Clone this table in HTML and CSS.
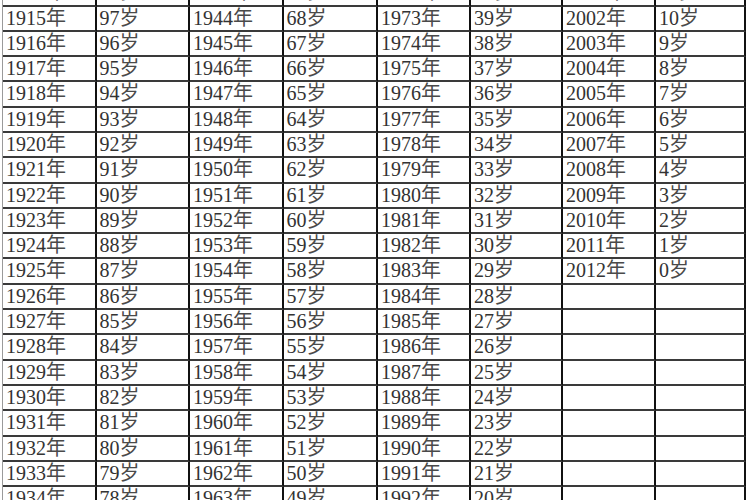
FILE: index.html
```html
<!DOCTYPE html>
<html lang="zh">
<head>
<meta charset="utf-8">
<title>年龄对照表</title>
<link rel="stylesheet" href="styles.css">
</head>
<body>
<div class="page">
  <div class="grid" id="grid"></div>
</div>
<script src="script.js"></script>
</body>
</html>
```
FILE: styles.css
```css
html, body {
  margin: 0;
  padding: 0;
  background: #fff;
}
.page {
  width: 750px;
  height: 500px;
  overflow: hidden;
  padding-left: 2px;
  box-sizing: border-box;
}
.grid {
  display: grid;
  grid-template-columns: 93.5px 93.5px 93.5px 94.5px 93px 92px 93px 90px;
  grid-auto-rows: 25.3px;
  margin-top: -18.8px;
  border-left: 1px solid #9a9a9a;
  width: max-content;
}
.cell {
  box-sizing: border-box;
  border-bottom: 2px solid #3a3a3a;
  border-right: 2px solid #111;
  padding-left: 3px;
  font-family: "Liberation Serif", "Noto Sans CJK SC", serif;
  font-size: 20px;
  line-height: 23px;
  color: #333;
  overflow: hidden;
  white-space: nowrap;
}
.cell .u {
  font-family: "Noto Sans CJK SC", sans-serif;
  line-height: 1;
  color: #4a4a4a;
}
```
FILE: script.js
```js
(function () {
  var grid = document.getElementById('grid');
  var html = '';
  for (var r = 0; r < 21; r++) {
    var starts = [1914, 1943, 1972, 2001];
    for (var c = 0; c < 4; c++) {
      var y = starts[c] + r;
      if (y <= 2012) {
        html += '<div class="cell">' + y + '<span class="u">年</span></div>';
        html += '<div class="cell">' + (2012 - y) + '<span class="u">岁</span></div>';
      } else {
        html += '<div class="cell"></div><div class="cell"></div>';
      }
    }
  }
  grid.innerHTML = html;
})();
```
